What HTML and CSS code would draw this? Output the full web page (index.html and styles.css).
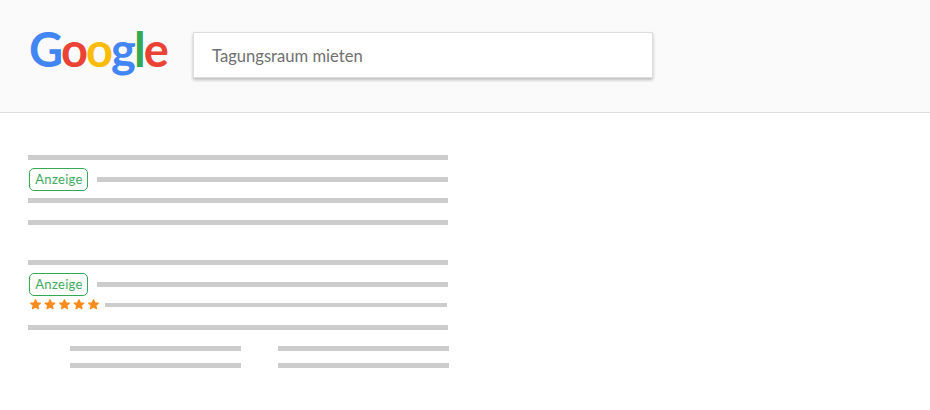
FILE: index.html
```html
<!DOCTYPE html>
<html lang="de">
<head>
  <meta charset="UTF-8">
  <title>Tagungsraum mieten</title>
  <link rel="stylesheet" href="styles.css">
</head>
<body>

  <header class="header">
    <div class="logo"><span class="blue">G</span><span class="red">o</span><span class="yellow">o</span><span class="blue">g</span><span class="green">l</span><span class="red">e</span></div>
    <div class="search">Tagungsraum mieten</div>
  </header>

  <main class="results">
    <section class="result">
      <div class="bar"></div>
      <div class="ad-row">
        <span class="badge">Anzeige</span>
        <div class="bar grow"></div>
      </div>
      <div class="bar after-ad"></div>
      <div class="bar last"></div>
    </section>

    <section class="result">
      <div class="bar"></div>
      <div class="ad-row">
        <span class="badge">Anzeige</span>
        <div class="bar grow"></div>
      </div>
      <div class="rating-row">
        <svg class="stars" width="71" height="12" viewBox="-0.5 0.7 71 12">
          <polygon points="6,1.4 7.4,4.5 10.8,4.9 8.3,7.1 9,10.4 6,8.7 3,10.4 3.7,7.1 1.2,4.9 4.6,4.5"/>
          <polygon transform="translate(14.5 0)" points="6,1.4 7.4,4.5 10.8,4.9 8.3,7.1 9,10.4 6,8.7 3,10.4 3.7,7.1 1.2,4.9 4.6,4.5"/>
          <polygon transform="translate(29 0)" points="6,1.4 7.4,4.5 10.8,4.9 8.3,7.1 9,10.4 6,8.7 3,10.4 3.7,7.1 1.2,4.9 4.6,4.5"/>
          <polygon transform="translate(43.5 0)" points="6,1.4 7.4,4.5 10.8,4.9 8.3,7.1 9,10.4 6,8.7 3,10.4 3.7,7.1 1.2,4.9 4.6,4.5"/>
          <polygon transform="translate(58 0)" points="6,1.4 7.4,4.5 10.8,4.9 8.3,7.1 9,10.4 6,8.7 3,10.4 3.7,7.1 1.2,4.9 4.6,4.5"/>
        </svg>
        <div class="bar thin"></div>
      </div>
      <div class="bar after-rating"></div>
      <div class="sitelinks">
        <div class="bar"></div>
        <div class="bar"></div>
        <div class="bar"></div>
        <div class="bar"></div>
      </div>
    </section>
  </main>

</body>
</html>
```

FILE: styles.css
```css
body {
  margin: 0;
  background: #fff;
  font-family: "Lato", sans-serif;
}
.header {
  display: flex;
  align-items: flex-start;
  height: 112px;
  padding-left: 29px;
  background: #fafafa;
  border-bottom: 1px solid #ddd;
}
.logo {
  width: 164px;
  margin-top: 20px;
  font-size: 47px;
  font-weight: 700;
  line-height: 58px;
  letter-spacing: -1.9px;
}
.blue { color: #4285f4; }
.red { color: #ea4335; }
.yellow { color: #fbbc05; }
.green { color: #34a853; }
.search {
  box-sizing: border-box;
  width: 460px;
  height: 46px;
  margin-top: 32px;
  padding-left: 18px;
  background: #fff;
  border: 1px solid #ddd;
  box-shadow: 0 2px 3px rgba(0,0,0,0.25);
  color: #707070;
  font-size: 16.6px;
  line-height: 46px;
}
.results {
  width: 420px;
  padding: 42px 0 0 28px;
}
.result {
  margin-bottom: 35px;
}
.bar {
  height: 5px;
  background: #ccc;
}
.grow {
  flex: 1;
}
.ad-row {
  display: flex;
  align-items: center;
  gap: 9px;
  margin-top: 8px;
  padding-left: 1px;
}
.badge {
  box-sizing: border-box;
  width: 59px;
  height: 23px;
  padding-left: 1px;
  border: 1px solid #34a853;
  border-radius: 5px;
  color: #3dab5c;
  font-size: 13px;
  letter-spacing: 0.3px;
  line-height: 21px;
  text-align: center;
}
.after-ad {
  margin-top: 7px;
}
.last {
  margin-top: 17px;
}
.rating-row {
  display: flex;
  align-items: center;
  gap: 5px;
  margin-top: 3px;
  padding-left: 1px;
  margin-right: 1px;
}
.stars {
  fill: #f98b1d;
  stroke: #f98b1d;
  stroke-width: 1.2;
  stroke-linejoin: round;
}
.thin {
  flex: 1;
  height: 4px;
}
.after-rating {
  margin-top: 14px;
}
.sitelinks {
  display: grid;
  grid-template-columns: 171px 171px;
  column-gap: 37px;
  row-gap: 12px;
  margin-top: 16px;
  margin-left: 42px;
}
```
